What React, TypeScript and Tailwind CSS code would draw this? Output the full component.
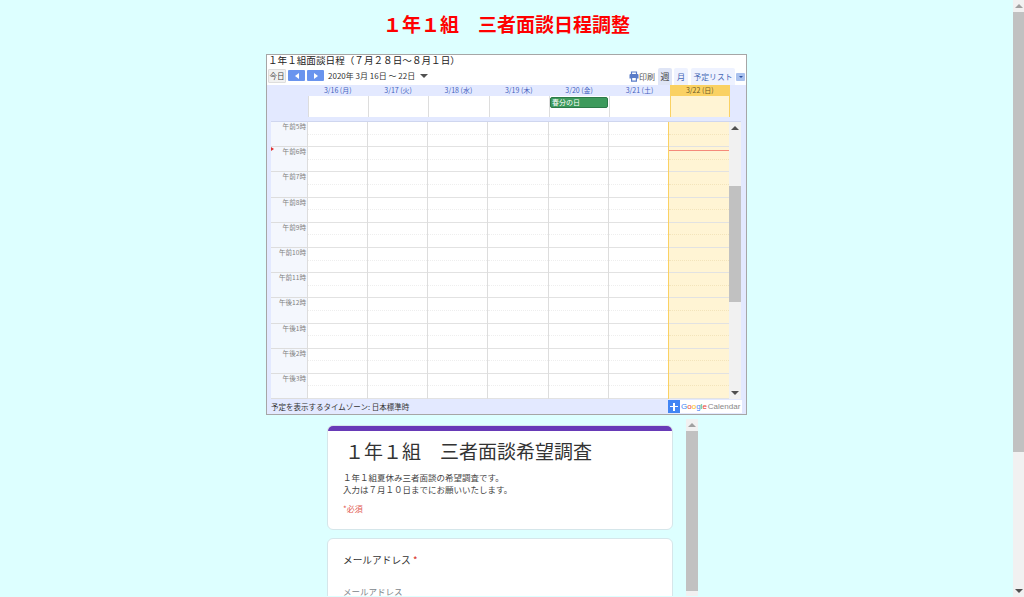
const font = "font-['Noto_Sans_CJK_JP','Noto_Sans',sans-serif]"

const days = [
  { label: '3/16 (月)' },
  { label: '3/17 (火)' },
  { label: '3/18 (水)' },
  { label: '3/19 (木)' },
  { label: '3/20 (金)', event: '春分の日' },
  { label: '3/21 (土)' },
  { label: '3/22 (日)', today: true },
]

const hours = ['午前5時', '午前6時', '午前7時', '午前8時', '午前9時', '午前10時', '午前11時', '午後12時', '午後1時', '午後2時', '午後3時']

function Arrow({ up, className }: { up?: boolean; className?: string }) {
  return (
    <div
      className={`h-0 w-0 border-x-[4px] border-x-transparent ${up ? 'border-b-[4px] border-b-[#505050]' : 'border-t-[4px] border-t-[#505050]'} ${className ?? ''}`}
    />
  )
}

function PrintIcon() {
  return (
    <svg width="10" height="11" viewBox="0 0 10 11" className="text-[#5a7cc8]">
      <path d="M2.5 3V1h5v2" fill="none" stroke="currentColor" strokeWidth="1.2" />
      <path d="M1.5 3h7a1 1 0 0 1 1 1v3.5H8V6H2v1.5H.5V4a1 1 0 0 1 1-1z" fill="currentColor" />
      <path d="M2.6 6.5h4.8v3.6H2.6z" fill="none" stroke="currentColor" strokeWidth="1.2" />
    </svg>
  )
}

function Toolbar() {
  return (
    <div className="flex h-[16px] items-start pl-[1px] text-[8px] text-[#333]">
      <div className="flex h-[14px] w-[18px] items-center justify-center rounded-[1px] border border-[#ddd] bg-[#f1f1f1] text-[7.5px] text-[#444]">今日</div>
      <div className="mt-[1px] ml-[2px] flex h-[11px] w-[17px] items-center justify-center rounded-[1px] bg-[#6a94ee]">
        <div className="h-0 w-0 border-y-[3px] border-r-[4px] border-y-transparent border-r-white" />
      </div>
      <div className="mt-[1px] ml-[2px] flex h-[11px] w-[17px] items-center justify-center rounded-[1px] bg-[#6a94ee]">
        <div className="h-0 w-0 border-y-[3px] border-l-[4px] border-y-transparent border-l-white" />
      </div>
      <span className="ml-[4px] h-[14px] w-[92px] leading-[13px] whitespace-nowrap">2020年 3月 16日 ～ 22日</span>
      <Arrow className="mt-[5px] border-t-[#444]" />
      <div className="ml-auto flex h-[17px] items-center self-end text-[#555]">
        <PrintIcon />
        <span className="text-[8px]">印刷</span>
        <div className="ml-[3px] flex h-[17px] w-[14px] items-center justify-center rounded-t-[2px] bg-[#dfe5f6] text-[9px] text-[#444]">週</div>
        <div className="ml-[2px] flex h-[17px] w-[14px] items-center justify-center rounded-t-[2px] bg-[#eef2ff] text-[8.5px] text-[#4668b5]">月</div>
        <div className="ml-[3px] flex h-[17px] w-[44px] items-center justify-center rounded-t-[2px] bg-[#eef2ff] text-[7.8px] whitespace-nowrap text-[#4668b5]">予定リスト</div>
        <div className="mr-[1px] ml-[1px] flex h-[8px] w-[9px] items-center justify-center rounded-[1px] bg-[#a9c1ee]">
          <div className="h-0 w-0 border-x-[2px] border-t-[2px] border-x-transparent border-t-[#2a4fa0]" />
        </div>
      </div>
    </div>
  )
}

function WeekHeader() {
  return (
    <div className="flex pl-[40.6px]">
      {days.map((d) => (
        <div key={d.label} className="w-[60.35px] shrink-0">
          <div className={`flex h-[11px] items-center justify-center text-[7px] ${d.today ? 'bg-[#fad163] text-[#6b5a2a]' : 'text-[#3f5fc0]'}`}>{d.label}</div>
          <div className={`h-[21px] border-l border-[#dddddd] pt-[1px] ${d.today ? 'border-r border-l-[#fad163] border-r-[#fad163] bg-[#fff4d4]' : 'bg-white'}`}>
            {d.event && (
              <div className="mr-[1px] flex h-[11px] items-center rounded-[2px] border border-[#2c7a48] bg-[#3d9a5c] pl-[1px] text-[7px] text-white">{d.event}</div>
            )}
          </div>
        </div>
      ))}
    </div>
  )
}

function TimeGrid() {
  return (
    <div className="mt-[4px] ml-[4px] flex h-[278px] w-[470px] border-t border-[#cfd6ef]">
      <div className="w-[36px] shrink-0 bg-[#f4f7fd]">
        {hours.map((h) => (
          <div key={h} className="relative h-[25.2px] border-b border-[#dddddd] pr-[1px] text-right text-[6.6px] leading-[9px] text-[#808080]">
            {h}
            {h === '午前6時' && (
              <div className="absolute top-[0px] left-0 h-0 w-0 border-y-[2px] border-l-[3px] border-y-transparent border-l-[#e03030]" />
            )}
          </div>
        ))}
      </div>
      {days.map((d) => (
        <div key={d.label} className={`relative shrink-0 border-l ${d.today ? 'w-[61px] border-[#fad163] bg-[#fff4d4]' : 'w-[60.15px] border-[#dddddd] bg-white'}`}>
          {hours.map((h) => (
            <div key={h} className="h-[25.2px] border-b border-[#e2e2e2]">
              <div className={`h-[12.6px] border-b border-dotted ${d.today ? 'border-[#f3e4bb]' : 'border-[#eeeeee]'}`} />
            </div>
          ))}
          {d.today && <div className="absolute top-[28px] right-0 left-0 h-[1px] bg-[#f58a7a]" />}
        </div>
      ))}
      <div className="flex w-[12px] shrink-0 flex-col items-center bg-[#f1f1f1]">
        <Arrow up className="mt-[4px]" />
        <div className="mt-[56px] h-[116px] w-full bg-[#c1c1c1]" />
        <Arrow className="mt-auto mb-[4px]" />
      </div>
    </div>
  )
}

function CalendarFooter() {
  return (
    <div className="flex h-[15px] items-center justify-between pr-[4px] pl-[4px] text-[7.5px] text-[#333]">
      <span className="pt-[1px]">予定を表示するタイムゾーン: 日本標準時</span>
      <div className="flex h-[13px] w-[74px] items-center bg-white font-['Liberation_Sans',sans-serif] text-[8px]">
        <div className="relative mr-[1px] h-[13px] w-[12px] shrink-0 bg-[#4285f4]">
          <div className="absolute top-[5.8px] left-[2px] h-[1.5px] w-[8px] bg-white" />
          <div className="absolute top-[2.5px] left-[5.2px] h-[8px] w-[1.5px] bg-white" />
        </div>
        <span className="text-[#4285f4]">G</span>
        <span className="text-[#ea4335]">o</span>
        <span className="text-[#fbbc05]">o</span>
        <span className="text-[#4285f4]">g</span>
        <span className="text-[#34a853]">l</span>
        <span className="text-[#ea4335]">e</span>
        <span className="ml-[1px] text-[#888]">Calendar</span>
      </div>
    </div>
  )
}

function Calendar() {
  return (
    <div className="mx-auto h-[361px] w-[481px] overflow-hidden border border-[#a6a6a6] bg-white">
      <div className="h-[14px] pl-[1px] text-[9.6px] leading-[11px] text-[#222]">１年１組面談日程（７月２８日〜８月１日）</div>
      <Toolbar />
      <div className="h-[329px] bg-[#e3e9ff]">
        <WeekHeader />
        <TimeGrid />
        <CalendarFooter />
      </div>
    </div>
  )
}

function Form() {
  return (
    <div className="mx-auto mt-[4px] flex h-[177px] w-[383px] overflow-hidden">
      <div className="ml-[12px] w-[346px] shrink-0 pt-[6px]">
        <div className="h-[105px] overflow-hidden rounded-[6px] border border-[#d5e6ea] bg-white">
          <div className="-mx-[1px] -mt-[1px] h-[6px] bg-[#673ab7]" />
          <div className="pt-[6px] pl-[17px] text-[19px] leading-[27px] text-[#333]">１年１組　三者面談希望調査</div>
          <div className="mt-[7px] pl-[15px] text-[8.5px] leading-[12px] text-[#444]">
            <div>１年１組夏休み三者面談の希望調査です。</div>
            <div>入力は７月１０日までにお願いいたします。</div>
          </div>
          <div className="mt-[8px] pl-[15px] text-[8px] leading-[12px] text-[#e25a50]">*必須</div>
        </div>
        <div className="mt-[8px] h-[80px] rounded-[6px] border border-[#d5e6ea] bg-white pt-[14px] pl-[15px]">
          <div className="text-[9.7px] leading-[14px] text-[#333]">
            メールアドレス<span className="text-[#d93025]"> *</span>
          </div>
          <div className="mt-[18px] text-[8.5px] leading-[12px] text-[#80868b]">メールアドレス</div>
        </div>
      </div>
      <div className="ml-[13px] flex w-[12px] shrink-0 flex-col items-center bg-[#f1f1f1]">
        <Arrow up className="mt-[4px] border-b-[#a0a0a0]" />
        <div className="mt-[4px] h-[160px] w-full bg-[#c1c1c1]" />
      </div>
    </div>
  )
}

export default function App() {
  return (
    <div className={`flex h-[597px] overflow-hidden bg-[#ddffff] ${font}`}>
      <div className="min-w-0 flex-1">
        <div className="flex h-[54px] items-start justify-center pt-[10px] text-[19px] leading-[27px] font-bold text-[#ff0000]">１年１組　三者面談日程調整</div>
        <Calendar />
        <Form />
      </div>
      <div className="flex w-[11px] shrink-0 flex-col items-center bg-[#f1f1f1]">
        <Arrow up className="mt-[4px] border-b-[#a0a0a0]" />
        <div className="mt-[4px] h-[440px] w-full bg-[#c1c1c1]" />
        <Arrow className="mt-auto mb-[4px]" />
      </div>
    </div>
  )
}
